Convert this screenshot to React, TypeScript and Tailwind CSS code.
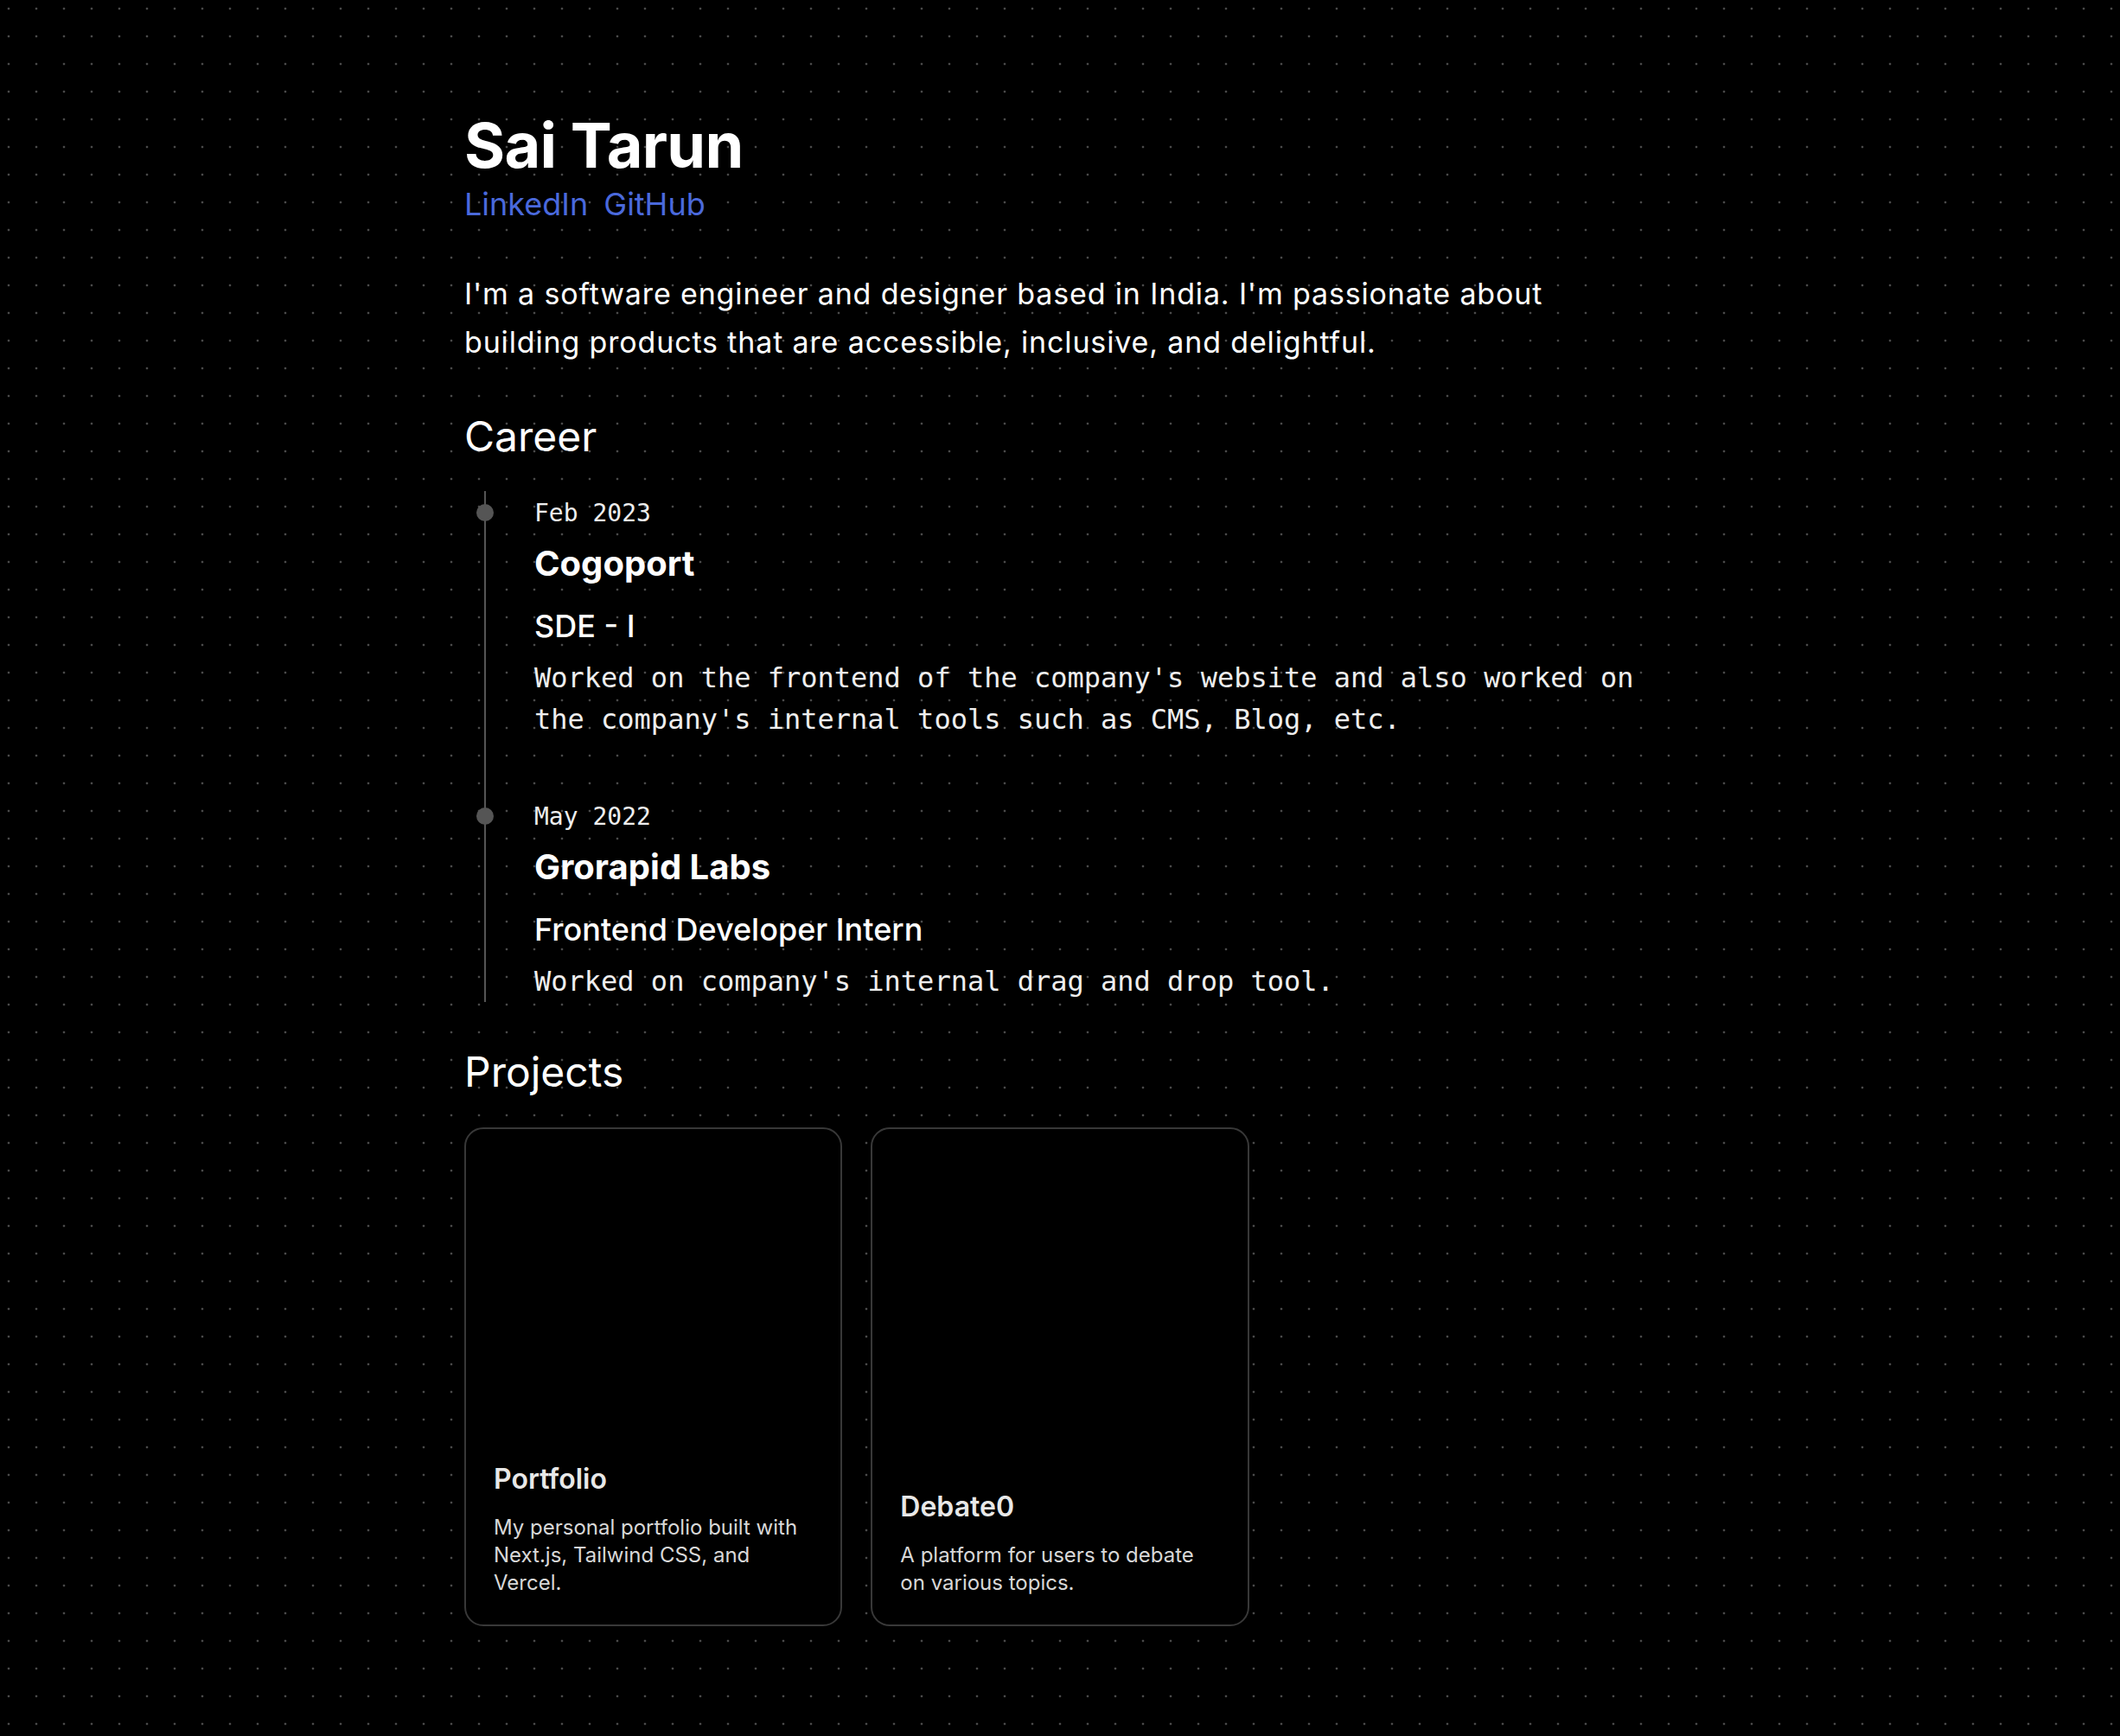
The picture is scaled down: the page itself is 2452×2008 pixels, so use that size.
import React from "react"

const jobs = [
  {
    date: "Feb 2023",
    company: "Cogoport",
    role: "SDE - I",
    desc: "Worked on the frontend of the company's website and also worked on the company's internal tools such as CMS, Blog, etc.",
  },
  {
    date: "May 2022",
    company: "Grorapid Labs",
    role: "Frontend Developer Intern",
    desc: "Worked on company's internal drag and drop tool.",
  },
]

const projects = [
  {
    title: "Portfolio",
    desc: "My personal portfolio built with Next.js, Tailwind CSS, and Vercel.",
  },
  {
    title: "Debate0",
    desc: "A platform for users to debate on various topics.",
  },
]

export default function App() {
  return (
    <div className="min-h-[2008px] w-full bg-black bg-[radial-gradient(circle,#4a4a4a_1.1px,transparent_1.7px)] bg-[length:32px_32px] bg-[position:-6px_-6px] font-['Inter',sans-serif] text-white">
      <main className="mx-auto w-[1378px] pt-[132px]">
        {/* Header */}
        <h1 className="text-[72px] leading-[72px] font-bold tracking-[-0.01em]">Sai Tarun</h1>
        <div className="mt-[12px] flex gap-[18px] text-[36px] leading-[40px] text-[#4a69dc]">
          <a href="#">LinkedIn</a>
          <a href="#">GitHub</a>
        </div>

        <p className="mt-[56px] w-[1320px] text-[34px] leading-[56px] tracking-[0.025em] text-white">
          I'm a software engineer and designer based in India. I'm passionate about building products that are
          accessible, inclusive, and delightful.
        </p>

        {/* Career */}
        <h2 className="mt-[53px] text-[48px] leading-[56px]">Career</h2>
        <ol className="ml-[23px] mt-[35px] border-l-2 border-[#555] pt-[5px]">
          {jobs.map((job, i) => (
            <li key={job.company} className={`relative pl-[56px] ${i > 0 ? "mt-[68px]" : ""}`}>
              <span className="absolute left-[-11px] top-[10px] h-[20px] w-[20px] rounded-full bg-[#555]" />
              <div className="font-['DejaVu_Sans_Mono',monospace] text-[28px] leading-[42px] text-[#eee]">
                {job.date}
              </div>
              <h3 className="mt-[13px] text-[40px] leading-[48px] font-bold">{job.company}</h3>
              <h4 className="mt-[26px] text-[36px] leading-[44px] font-medium">{job.role}</h4>
              <p className="mt-[14px] w-[1290px] font-['DejaVu_Sans_Mono',monospace] text-[32px] leading-[48px] text-[#eee]">
                {job.desc}
              </p>
            </li>
          ))}
        </ol>

        {/* Projects */}
        <h2 className="mt-[53px] text-[48px] leading-[56px]">Projects</h2>
        <div className="mt-[36px] grid grid-cols-3 gap-[33px]">
          {projects.map((p) => (
            <div
              key={p.title}
              className="flex h-[577px] flex-col justify-end rounded-[22px] border-2 border-[#383838] bg-black px-[32px] pb-[32px]"
            >
              <h3 className="text-[32px] leading-[40px] font-semibold text-[#e8e8e8]">{p.title}</h3>
              <p className="mt-[20px] text-[24px] leading-[32px] text-[#d8d8d8]">{p.desc}</p>
            </div>
          ))}
        </div>
      </main>
    </div>
  )
}
